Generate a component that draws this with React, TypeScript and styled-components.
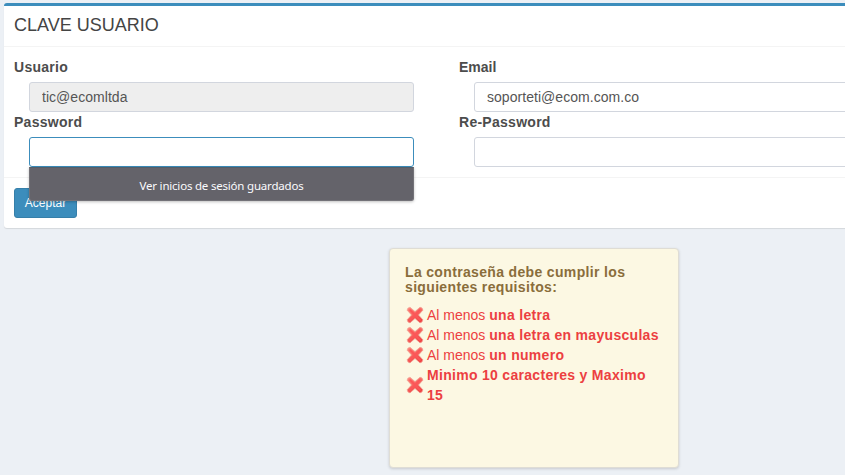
import React from 'react';
import styled, { createGlobalStyle } from 'styled-components';

const GlobalStyle = createGlobalStyle`
  *, *::before, *::after { box-sizing: border-box; }
  html, body { margin: 0; height: 100%; overflow: hidden; }
  body {
    background: #ecf0f5;
    color: #444;
    font: 14px/20px "Liberation Sans", Arial, sans-serif;
  }
`;

const Viewport = styled.div`
  height: 100vh;
  overflow: hidden;
`;

const Page = styled.main`
  width: 914px;
  padding: 3px 0 0 4px;
`;

const Box = styled.form`
  background: #fff;
  border-top: 3px solid #3c8dbc;
  border-radius: 3px;
  box-shadow: 0 1px 1px rgba(0, 0, 0, 0.1);
`;

const BoxHeader = styled.header`
  height: 41px;
  padding: 10px;
  border-bottom: 1px solid #f4f4f4;
`;

const BoxTitle = styled.h3`
  margin: 0;
  font-size: 18px;
  font-weight: 400;
  line-height: 18px;
`;

const BoxBody = styled.div`
  display: grid;
  grid-template-columns: 445px 445px;
  padding: 10px;
`;

const Field = styled.div`
  display: flex;
  flex-direction: column;
`;

const Label = styled.label<{ $tracking?: number }>`
  height: 20px;
  margin-bottom: 5px;
  font-weight: 700;
  color: #4c4c4c;
  letter-spacing: ${(p) => p.$tracking ?? 0.27}px;
`;

const InputSlot = styled.div`
  position: relative;
  width: 385px;
  margin-left: 15px;
`;

const Input = styled.input<{ $focused?: boolean }>`
  display: block;
  width: 100%;
  height: 30px;
  padding: 4px 12px;
  border: 1px solid ${(p) => (p.$focused ? '#3c8dbc' : '#d2d6de')};
  border-radius: 3px;
  outline: none;
  background: ${(p) => (p.readOnly ? '#eee' : '#fff')};
  color: #555;
  font: inherit;
  letter-spacing: 0.04px;
`;

const SavedLogins = styled.div`
  position: absolute;
  z-index: 1;
  top: 30px;
  left: 0;
  width: 100%;
  height: 34px;
  padding-top: 2px;
  border: 1px solid #737278;
  border-top-color: #515e6b;
  border-radius: 0 0 3px 3px;
  background: #64636a;
  box-shadow: 0 1px 3px rgba(0, 0, 0, 0.25);
  color: #fbfbfe;
  font: 11.5px/32px "Noto Sans", "Open Sans", sans-serif;
  letter-spacing: -0.2px;
  text-align: center;
`;

const BoxFooter = styled.footer`
  padding: 10px;
  border-top: 1px solid #f4f4f4;
`;

const SubmitButton = styled.button`
  display: block;
  width: 63px;
  height: 30px;
  padding: 0;
  border: 1px solid #367fa9;
  border-radius: 3px;
  background: #3c8dbc;
  color: #fff;
  font: 12px/18px "Liberation Sans", Arial, sans-serif;
`;

const Callout = styled.aside`
  width: 290px;
  height: 220px;
  margin: 20px 0 0 385px;
  padding: 16px 15px 14px;
  border: 1px solid #dfddd5;
  border-radius: 4px;
  background: #fcf8e3;
  box-shadow: 0 1px 3px rgba(0, 0, 0, 0.16);
`;

const CalloutTitle = styled.h4`
  margin: 0 0 10px;
  color: #8a6d3b;
  font-size: 14px;
  font-weight: 700;
  line-height: 15px;
  letter-spacing: 0.34px;
`;

const Rules = styled.ul`
  margin: 0;
  padding: 0;
  list-style: none;
`;

const Rule = styled.li`
  display: flex;
  align-items: center;
  color: #ec3f41;
`;

const RuleText = styled.span`
  flex: 1;

  b { letter-spacing: 0.3px; }
`;

const CrossSvg = styled.svg`
  flex: none;
  width: 18px;
  height: 18px;
  margin: 0 3px 0 1px;
`;

const Cross = () => (
  <CrossSvg viewBox="0 0 18 18" aria-hidden="true">
    <defs>
      <linearGradient id="cross-fill" x1="0" y1="0" x2="0.5" y2="1">
        <stop offset="0" stopColor="#ff8e82" />
        <stop offset="1" stopColor="#f04444" />
      </linearGradient>
    </defs>
    <path
      d="M4 1.2 9 5.6 14 1.2Q16.8 1.6 16.9 4.2L12.5 9 16.9 13.8Q16.6 16.6 14 16.9L9 12.4 4 16.9Q1.3 16.5 1.1 13.8L5.5 9 1.1 4.2Q1.3 1.5 4 1.2Z"
      fill="url(#cross-fill)"
      stroke="#f0a094"
      strokeWidth="0.7"
      strokeLinejoin="round"
    />
    <path d="m4.2 4.2 9.6 9.6m0-9.6-9.6 9.6" stroke="#fc5558" strokeWidth="1.8" strokeLinecap="round" />
  </CrossSvg>
);

export default function App() {
  return (
    <Viewport>
      <GlobalStyle />
      <Page>
        <Box>
          <BoxHeader>
            <BoxTitle>CLAVE USUARIO</BoxTitle>
          </BoxHeader>
          <BoxBody>
            <Field>
              <Label htmlFor="user">Usuario</Label>
              <InputSlot>
                <Input id="user" readOnly defaultValue="tic@ecomltda" />
              </InputSlot>
            </Field>
            <Field>
              <Label htmlFor="email" $tracking={0}>Email</Label>
              <InputSlot>
                <Input id="email" defaultValue="soporteti@ecom.com.co" />
              </InputSlot>
            </Field>
            <Field>
              <Label htmlFor="password">Password</Label>
              <InputSlot>
                <Input id="password" type="password" $focused />
                <SavedLogins>Ver inicios de sesión guardados</SavedLogins>
              </InputSlot>
            </Field>
            <Field>
              <Label htmlFor="repeat">Re-Password</Label>
              <InputSlot>
                <Input id="repeat" type="password" />
              </InputSlot>
            </Field>
          </BoxBody>
          <BoxFooter>
            <SubmitButton type="button">Aceptar</SubmitButton>
          </BoxFooter>
        </Box>
        <Callout>
          <CalloutTitle>
            La contraseña debe cumplir los
            <br />
            siguientes requisitos:
          </CalloutTitle>
          <Rules>
            <Rule>
              <Cross />
              <RuleText>
                Al menos <b>una letra</b>
              </RuleText>
            </Rule>
            <Rule>
              <Cross />
              <RuleText>
                Al menos <b>una letra en mayusculas</b>
              </RuleText>
            </Rule>
            <Rule>
              <Cross />
              <RuleText>
                Al menos <b>un numero</b>
              </RuleText>
            </Rule>
            <Rule>
              <Cross />
              <RuleText>
                <b>
                  Minimo 10 caracteres y Maximo
                  <br />
                  15
                </b>
              </RuleText>
            </Rule>
          </Rules>
        </Callout>
      </Page>
    </Viewport>
  );
}
